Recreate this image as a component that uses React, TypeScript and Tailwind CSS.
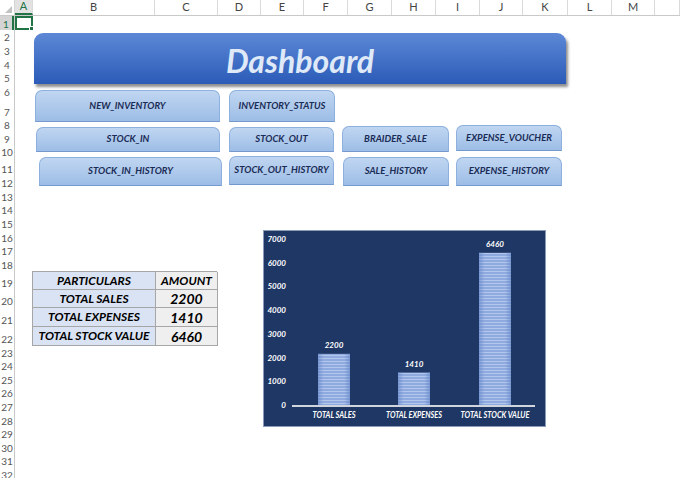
const COLUMNS = [
  { label: 'A', width: 'w-[18px]', active: true },
  { label: 'B', width: 'w-[122px]' },
  { label: 'C', width: 'w-[63px]' },
  { label: 'D', width: 'w-[43px]' },
  { label: 'E', width: 'w-[43px]' },
  { label: 'F', width: 'w-[44px]' },
  { label: 'G', width: 'w-[44px]' },
  { label: 'H', width: 'w-[44px]' },
  { label: 'I', width: 'w-[44px]' },
  { label: 'J', width: 'w-[43px]' },
  { label: 'K', width: 'w-[45px]' },
  { label: 'L', width: 'w-[44px]' },
  { label: 'M', width: 'w-[43px]' },
  { label: '', width: 'w-[25px]' }
];

// row heights follow the sheet: 7, 11 and 19-22 are taller
const ROW_HEIGHTS = [
  'h-[14px]', 'h-[13px]', 'h-[14px]', 'h-[14px]', 'h-[13px]', 'h-[14px]',
  'h-[20px]',
  'h-[13px]', 'h-[14px]', 'h-[13px]',
  'h-[17px]',
  'h-[14px]', 'h-[14px]', 'h-[13px]', 'h-[14px]', 'h-[14px]', 'h-[13px]', 'h-[14px]',
  'h-[18px]', 'h-[18px]', 'h-[19px]', 'h-[19px]',
  'h-[14px]', 'h-[13px]', 'h-[14px]', 'h-[13px]', 'h-[14px]', 'h-[14px]', 'h-[13px]', 'h-[14px]', 'h-[13px]', 'h-[14px]'
];

const SUMMARY = [
  { label: 'TOTAL SALES', value: 2200 },
  { label: 'TOTAL EXPENSES', value: 1410 },
  { label: 'TOTAL STOCK VALUE', value: 6460 }
];

const CHART_W = 283;
const CHART_H = 197;
const BASE_Y = 176;
const TOP_Y = 10;
const MAX_VALUE = 7000;
const BAR_W = 32;
const BAR_X = [55, 135, 216];
const LABEL_WIDTHS = [43, 56, 69];

const toY = (value: number): number => BASE_Y - (value / MAX_VALUE) * (BASE_Y - TOP_Y);

const MacroButton = ({ label, className }: { label: string; className: string }) => (
  <div
    className={`flex items-center justify-center rounded-t-[7px] border border-[#8db0de] border-b-[#7499cf] bg-linear-to-b from-[#c0d6f1] to-[#9dbde6] text-[9.5px] font-bold italic text-[#1a2b55] ${className}`}
  >
    {label}
  </div>
);

const SummaryChart = () => {
  const ticks = [0, 1000, 2000, 3000, 4000, 5000, 6000, 7000];

  return (
    <svg width={CHART_W} height={CHART_H} viewBox={`0 0 ${CHART_W} ${CHART_H}`} className="block">
      <defs>
        <pattern id="stripes" width="4" height="3" patternUnits="userSpaceOnUse">
          <rect width="4" height="3" fill="#8faadf" />
          <rect y="2" width="4" height="1" fill="#b3c6ec" />
        </pattern>
        <linearGradient id="barEdge" x1="0" x2="1" y1="0" y2="0">
          <stop offset="0" stopColor="#5a7fc4" stopOpacity="0.55" />
          <stop offset="0.18" stopColor="#5a7fc4" stopOpacity="0" />
          <stop offset="0.82" stopColor="#5a7fc4" stopOpacity="0" />
          <stop offset="1" stopColor="#5a7fc4" stopOpacity="0.55" />
        </linearGradient>
      </defs>
      <rect x="0.5" y="0.5" width={CHART_W - 1} height={CHART_H - 1} fill="#1f3764" stroke="#8c9cb8" />
      {ticks.map((tick) => (
        <text
          key={tick}
          x="23"
          y={toY(tick)}
          textAnchor="end"
          dominantBaseline="middle"
          fontFamily="Lato, sans-serif"
          fontSize="8"
          fontWeight="700"
          fontStyle="italic"
          fill="#ffffff"
        >
          {tick}
        </text>
      ))}
      {SUMMARY.map((item, index) => {
        const top = toY(item.value);
        const x = BAR_X[index]!;
        return (
          <g key={item.label}>
            <rect x={x} y={top} width={BAR_W} height={BASE_Y - top} fill="url(#stripes)" />
            <rect x={x} y={top} width={BAR_W} height={BASE_Y - top} fill="url(#barEdge)" />
            <text
              x={x + BAR_W / 2}
              y={top - 8}
              textAnchor="middle"
              dominantBaseline="middle"
              fontFamily="Lato, sans-serif"
              fontSize="8"
              fontWeight="700"
              fontStyle="italic"
              fill="#ffffff"
            >
              {item.value}
            </text>
            <text
              x={x + BAR_W / 2}
              y="186"
              textAnchor="middle"
              dominantBaseline="middle"
              fontFamily="Lato, sans-serif"
              fontSize="8.5"
              fontWeight="700"
              fontStyle="italic"
              fill="#ffffff"
              textLength={LABEL_WIDTHS[index]}
              lengthAdjust="spacingAndGlyphs"
            >
              {item.label}
            </text>
          </g>
        );
      })}
      <line x1="29" x2="272" y1={BASE_Y} y2={BASE_Y} stroke="#d0d4dc" strokeWidth="2" />
    </svg>
  );
};

export default function App() {
  return (
    <div className="flex h-[478px] w-[680px] flex-col overflow-hidden bg-white font-[Lato,sans-serif] text-black">
      {/* column headers */}
      <div className="flex h-[16px] shrink-0 border-b border-[#c9c9c9] bg-white text-[11px] text-[#444]">
        <div className="relative w-[15px] border-r border-[#d4d4d4]">
          <div className="absolute bottom-[2px] right-[2px] h-0 w-0 border-b-[7px] border-l-[7px] border-b-[#c2c2c2] border-l-transparent" />
        </div>
        {COLUMNS.map((col) => (
          <div
            key={col.label || 'end'}
            className={`flex items-center justify-center border-r border-[#dadada] ${col.width} ${
              col.active ? 'border-b-2 border-b-[#217346] bg-[#e2e2e2] text-[#217346]' : ''
            }`}
          >
            {col.label}
          </div>
        ))}
      </div>

      <div className="flex flex-1">
        {/* row headers */}
        <div className="flex w-[15px] shrink-0 flex-col border-r border-[#c9c9c9] text-[10px] text-[#555]">
          {ROW_HEIGHTS.map((height, index) => (
            <div
              key={index}
              className={`flex shrink-0 items-end justify-center leading-[12px] ${height} ${
                index === 0 ? 'border-r-2 border-r-[#217346] bg-[#d4d4d4] text-[#217346]' : ''
              }`}
            >
              {index + 1}
            </div>
          ))}
        </div>

        {/* sheet */}
        <div className="relative flex-1">
          <div className="absolute left-0 top-0 h-[14px] w-[18px] border-2 border-[#217346]">
            <div className="absolute -bottom-[3px] -right-[3px] h-[5px] w-[5px] border border-white bg-[#217346]" />
          </div>

          <div className="ml-[19px] mt-[17px] flex h-[51px] w-[532px] items-center justify-center rounded-t-[9px] bg-linear-to-b from-[#5d88d6] to-[#2b5bb8] pt-[4px] shadow-[2px_3px_3px_rgba(0,0,0,0.45)]">
            <span className="text-[32px] font-bold italic text-[#dfe9f8]">Dashboard</span>
          </div>

          <div className="mt-[6px] flex">
            <MacroButton label="NEW_INVENTORY" className="ml-[20px] h-[32px] w-[185px]" />
            <MacroButton label="INVENTORY_STATUS" className="ml-[9px] h-[32px] w-[106px]" />
          </div>

          <div className="mt-[3px] flex items-start">
            <MacroButton label="STOCK_IN" className="ml-[21px] mt-[2px] h-[25px] w-[184px]" />
            <MacroButton label="STOCK_OUT" className="ml-[9px] mt-[2px] h-[25px] w-[105px]" />
            <MacroButton label="BRAIDER_SALE" className="ml-[8px] mt-[1px] h-[26px] w-[107px]" />
            <MacroButton label="EXPENSE_VOUCHER" className="ml-[7px] h-[26px] w-[106px]" />
          </div>

          <div className="mt-[4px] flex items-start">
            <MacroButton label="STOCK_IN_HISTORY" className="ml-[24px] mt-[1px] h-[29px] w-[183px]" />
            <MacroButton label="STOCK_OUT_HISTORY" className="ml-[7px] h-[29px] w-[105px]" />
            <MacroButton label="SALE_HISTORY" className="ml-[9px] mt-[1px] h-[29px] w-[106px]" />
            <MacroButton label="EXPENSE_HISTORY" className="ml-[7px] mt-[1px] h-[29px] w-[106px]" />
          </div>

          <div className="flex items-start">
            <div className="ml-[17px] mt-[85px] grid w-[185px] grid-cols-[123px_62px] border-l border-t border-[#a6a6a6] font-bold italic">
              <div className="flex h-[18px] items-center justify-center border-b border-r border-[#a6a6a6] bg-[#dae3f3] text-[12px]">
                PARTICULARS
              </div>
              <div className="flex h-[18px] items-center justify-center border-b border-r border-[#a6a6a6] bg-[#efefef] text-[12px]">
                AMOUNT
              </div>
              {SUMMARY.map((row, index) => (
                <div key={row.label} className="contents">
                  <div
                    className={`flex items-center justify-center border-b border-r border-[#a6a6a6] bg-[#dae3f3] text-[12px] ${
                      index === 0 ? 'h-[18px]' : 'h-[19px]'
                    }`}
                  >
                    {row.label}
                  </div>
                  <div
                    className={`flex items-center justify-center border-b border-r border-[#a6a6a6] bg-[#efefef] text-[14px] ${
                      index === 0 ? 'h-[18px]' : 'h-[19px]'
                    }`}
                  >
                    {row.value}
                  </div>
                </div>
              ))}
            </div>

            <div className="ml-[46px] mt-[44px]">
              <SummaryChart />
            </div>
          </div>
        </div>
      </div>
    </div>
  );
}
